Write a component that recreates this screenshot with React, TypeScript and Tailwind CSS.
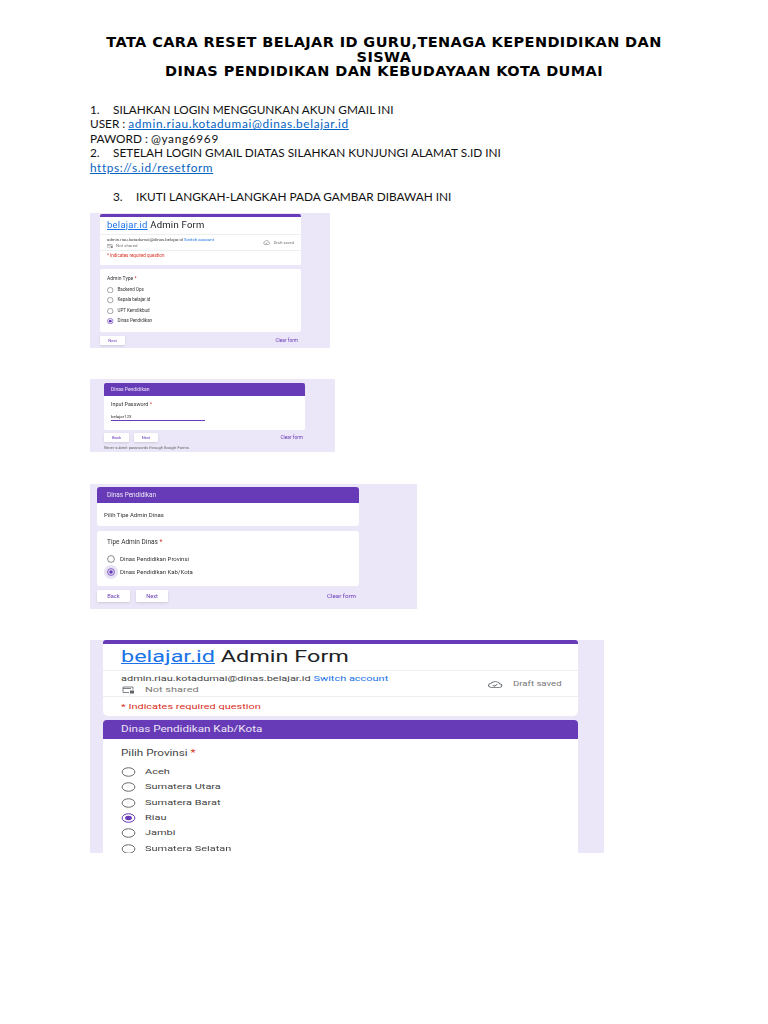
const PURPLE = 'bg-[#673ab7]'

function Radio({ className, checked, stroke = 1 }: { className: string; checked?: boolean; stroke?: number }) {
  return (
    <svg viewBox="0 0 20 20" preserveAspectRatio="none" className={className}>
      <ellipse cx="10" cy="10" rx="8.5" ry="8.5" fill="none" stroke={checked ? '#673ab7' : '#6b6b6b'} strokeWidth={stroke} vectorEffect="non-scaling-stroke" />
      {checked && <ellipse cx="10" cy="10" rx="4.5" ry="4.5" fill="#673ab7" />}
    </svg>
  )
}

function CloudIcon({ className }: { className: string }) {
  return (
    <svg viewBox="0 0 24 16" preserveAspectRatio="none" className={className} fill="none" stroke="#5f6368" strokeWidth="1.6">
      <path d="M6 14.5h12.5a4 4 0 0 0 .6-7.9A7 7 0 0 0 6 5.5a4.6 4.6 0 0 0 0 9z" />
      <path d="M8.5 9.5l2.5 2.5 4.5-4.5" />
    </svg>
  )
}

function FolderIcon({ className }: { className: string }) {
  return (
    <svg viewBox="0 0 24 16" className={className} fill="none" stroke="#5f6368" strokeWidth="1.6">
      <path d="M1 2h20v5M1 2v11h12" />
      <path d="M1 5h16" />
      <rect x="15" y="9" width="8" height="6" fill="#5f6368" stroke="none" />
    </svg>
  )
}

function FormOne() {
  return (
    <div className="mt-[8px] w-[240px] h-[135px] bg-[#ebe7f8] pl-[10px] pt-px overflow-hidden blur-[0.4px] font-['Roboto',sans-serif]">
      <div className="w-[201px] h-[51px] bg-white rounded-t-[2px] border-t-[3px] border-[#673ab7]">
        <div className="h-[17px] px-[7px] pt-[1px] text-[9.5px] leading-[14px] tracking-[0.25px] text-[#202124]">
          <span className="text-[#1a73e8] underline">belajar.id</span> Admin Form
        </div>
        <div className="h-[17px] border-y border-[#eeeeee] px-[7px] flex items-center justify-between">
          <div className="text-[4.4px] leading-[6px] text-[#444]">
            <div>
              admin.riau.kotadumai@dinas.belajar.id <span className="text-[#1a73e8]">Switch account</span>
            </div>
            <div className="flex items-center gap-[3px] text-[#777]">
              <FolderIcon className="w-[6px] h-[4px]" />
              Not shared
            </div>
          </div>
          <div className="flex items-center gap-[4px] text-[4px] text-[#777]">
            <CloudIcon className="w-[7px] h-[5px]" />
            Draft saved
          </div>
        </div>
        <div className="px-[7px] text-[4.5px] leading-[9px] text-[#d93025]">* Indicates required question</div>
      </div>
      <div className="mt-[4px] w-[201px] h-[63px] bg-white rounded-[2px] px-[7px] pt-[6px] text-[#333]">
        <div className="text-[5px] leading-[7px]">
          Admin Type <span className="text-[#d93025]">*</span>
        </div>
        <div className="mt-[5px] flex flex-col gap-[4px] text-[4.5px] leading-[6.3px]">
          {['Backend Ops', 'Kepala belajar.id', 'UPT Kemdikbud', 'Dinas Pendidikan'].map((label, i) => (
            <div key={label} className="flex items-center gap-[4px]">
              <Radio className="w-[6.5px] h-[6.3px]" checked={i === 3} stroke={0.6} />
              <span>{label}</span>
            </div>
          ))}
        </div>
      </div>
      <div className="mt-[4px] w-[200px] flex items-center justify-between">
        <div className="w-[25px] h-[9px] bg-white rounded-[1px] shadow-sm text-[4.2px] leading-[9px] text-center text-[#673ab7]">Next</div>
        <div className="text-[4.8px] leading-[9px] text-[#673ab7] pr-[2px]">Clear form</div>
      </div>
    </div>
  )
}

function FormTwo() {
  return (
    <div className="mt-[31px] w-[245px] h-[73px] bg-[#ebe7f8] pl-[14px] pt-[4px] overflow-hidden blur-[0.4px] font-['Roboto',sans-serif]">
      <div className="w-[201px]">
        <div className={`${PURPLE} h-[13px] rounded-t-[2px] px-[7px] text-[5px] leading-[13px] text-[#ede7f6]`}>Dinas Pendidikan</div>
        <div className="h-[34px] bg-white rounded-b-[2px] px-[7px] pt-[4px] text-[#333]">
          <div className="text-[5.4px] leading-[8px]">
            Input Password <span className="text-[#d93025]">*</span>
          </div>
          <div className="mt-[6px] w-[94px] border-b border-[#673ab7] text-[4.4px] leading-[6px]">belajar123</div>
        </div>
        <div className="mt-[3px] flex items-center gap-[5px]">
          <div className="w-[25px] h-[9px] bg-white rounded-[1px] shadow-sm text-[4.2px] leading-[9px] text-center text-[#673ab7]">Back</div>
          <div className="w-[24px] h-[9px] bg-white rounded-[1px] shadow-sm text-[4.2px] leading-[9px] text-center text-[#673ab7]">Next</div>
          <div className="ml-auto text-[4.8px] leading-[9px] text-[#673ab7] pr-[2px]">Clear form</div>
        </div>
        <div className="mt-[4px] text-[4px] leading-[4px] text-[#666]">Never submit passwords through Google Forms.</div>
      </div>
    </div>
  )
}

function FormThree() {
  return (
    <div className="mt-[32px] w-[327px] h-[125px] bg-[#ebe7f8] pl-[7px] pt-[3px] overflow-hidden blur-[0.3px] font-['Roboto',sans-serif]">
      <div className="w-[262px]">
        <div className={`${PURPLE} h-[16px] rounded-t-[3px] px-[10px] text-[6.4px] leading-[16px] text-[#ede7f6]`}>Dinas Pendidikan</div>
        <div className="h-[23px] bg-white rounded-b-[3px] px-[7px] text-[6px] leading-[23px] text-[#333]">Pilih Tipe Admin Dinas</div>
        <div className="mt-[5px] h-[55px] bg-white rounded-[3px] px-[10px] pt-[6px] text-[#333]">
          <div className="text-[6.5px] leading-[10px]">
            Tipe Admin Dinas <span className="text-[#d93025]">*</span>
          </div>
          <div className="mt-[7px] flex flex-col gap-[4px] text-[6px] leading-[9px]">
            <div className="flex items-center gap-[5px]">
              <Radio className="w-[8px] h-[8px]" stroke={0.8} />
              <span>Dinas Pendidikan Provinsi</span>
            </div>
            <div className="flex items-center gap-[5px]">
              <span className="w-[8px] h-[8px] rounded-full bg-[#673ab7]/15 ring-[3px] ring-[#673ab7]/15 flex">
                <Radio className="w-[8px] h-[8px]" checked stroke={0.8} />
              </span>
              <span>Dinas Pendidikan Kab/Kota</span>
            </div>
          </div>
        </div>
        <div className="mt-[4px] flex items-center gap-[6px]">
          <div className="w-[33px] h-[12px] bg-white rounded-[1px] shadow-sm text-[5.6px] leading-[12px] text-center text-[#673ab7]">Back</div>
          <div className="w-[32px] h-[12px] bg-white rounded-[1px] shadow-sm text-[5.6px] leading-[12px] text-center text-[#673ab7]">Next</div>
          <div className="ml-auto text-[6.2px] leading-[12px] text-[#673ab7] pr-[3px]">Clear form</div>
        </div>
      </div>
    </div>
  )
}

// the last picture is stretched sideways in the reference, so its text is too
const WIDE = 'inline-block origin-left scale-x-[1.37] whitespace-nowrap'

function FormFour() {
  return (
    <div className="mt-[31px] w-[514px] h-[213px] bg-[#ebe7f8] pl-[13px] overflow-hidden blur-[0.4px] font-['Roboto',sans-serif]">
      <div className="w-[475px] h-[76px] bg-white rounded-t-[3px] rounded-b-[5px] border-t-[4px] border-[#673ab7]">
        <div className="h-[26px] px-[18px] text-[16.5px] leading-[26px] text-[#202124]">
          <span className="inline-block origin-left scale-x-[1.42] whitespace-nowrap">
            <span className="text-[#1a73e8] underline">belajar.id</span> Admin Form
          </span>
        </div>
        <div className="h-[27px] border-y border-[#eeeeee] pl-[18px] pr-[18px] pt-[1px] flex items-center justify-between">
          <div className="text-[8px] leading-[11px]">
            <div className="text-[#444]">
              <span className={WIDE}>
                admin.riau.kotadumai@dinas.belajar.id <span className="text-[#1a73e8]">Switch account</span>
              </span>
            </div>
            <div className="flex items-center gap-[9px] text-[#777]">
              <FolderIcon className="w-[15px] h-[8px]" />
              <span className={WIDE}>Not shared</span>
            </div>
          </div>
          <div className="w-[73px] flex items-center gap-[10px] text-[7px] text-[#777]">
            <CloudIcon className="w-[16px] h-[7px]" />
            <span className={WIDE}>Draft saved</span>
          </div>
        </div>
        <div className="px-[18px] text-[8px] leading-[19px] text-[#d93025]">
          <span className={WIDE}>* Indicates required question</span>
        </div>
      </div>
      <div className="mt-[4px] w-[475px]">
        <div className={`${PURPLE} h-[19px] rounded-t-[4px] px-[18px] text-[8.5px] leading-[19px] text-[#ede7f6]`}>
          <span className={WIDE}>Dinas Pendidikan Kab/Kota</span>
        </div>
        <div className="h-[120px] bg-white px-[18px] pt-[9px] text-[#444]">
          <div className="text-[8.5px] leading-[10px]">
            <span className={WIDE}>
              Pilih Provinsi <span className="text-[#d93025]">*</span>
            </span>
          </div>
          <div className="mt-[9px] flex flex-col gap-[5.3px] text-[8px] leading-[10px]">
            {['Aceh', 'Sumatera Utara', 'Sumatera Barat', 'Riau', 'Jambi', 'Sumatera Selatan'].map((label, i) => (
              <div key={label} className="flex items-center gap-[9px]">
                <Radio className="w-[15px] h-[10px]" checked={i === 3} />
                <span className={WIDE}>{label}</span>
              </div>
            ))}
          </div>
        </div>
      </div>
    </div>
  )
}

export default function App() {
  return (
    <div className="min-h-[1024px] bg-white px-[90px] pt-[35px] text-black">
      <h1 className="text-center text-[14.5px] leading-[14.5px] tracking-[0.4px] font-bold font-['DejaVu_Sans',sans-serif]">
        TATA CARA RESET BELAJAR ID GURU,TENAGA KEPENDIDIKAN DAN SISWA
        <br />
        DINAS PENDIDIKAN DAN KEBUDAYAAN KOTA DUMAI
      </h1>
      <div className="mt-[24px] text-[11.8px] leading-[14.65px] text-[#111] font-['Lato',sans-serif]">
        <div className="flex">
          <span className="w-[23px]">1.</span>
          <span>SILAHKAN LOGIN MENGGUNKAN AKUN GMAIL INI</span>
        </div>
        <div>
          USER : <span className="text-[#0563c1] underline tracking-[0.65px]">admin.riau.kotadumai@dinas.belajar.id</span>
        </div>
        <div>
          PAWORD : <span className="tracking-[0.7px]">@yang6969</span>
        </div>
        <div className="flex">
          <span className="w-[23px]">2.</span>
          <span>SETELAH LOGIN GMAIL DIATAS SILAHKAN KUNJUNGI ALAMAT S.ID INI</span>
        </div>
        <div className="text-[#0563c1] underline tracking-[0.6px]">https://s.id/resetform</div>
        <div className="mt-[14.65px] flex pl-[23px]">
          <span className="w-[23px]">3.</span>
          <span>IKUTI LANGKAH-LANGKAH PADA GAMBAR DIBAWAH INI</span>
        </div>
      </div>
      <FormOne />
      <FormTwo />
      <FormThree />
      <FormFour />
    </div>
  )
}
